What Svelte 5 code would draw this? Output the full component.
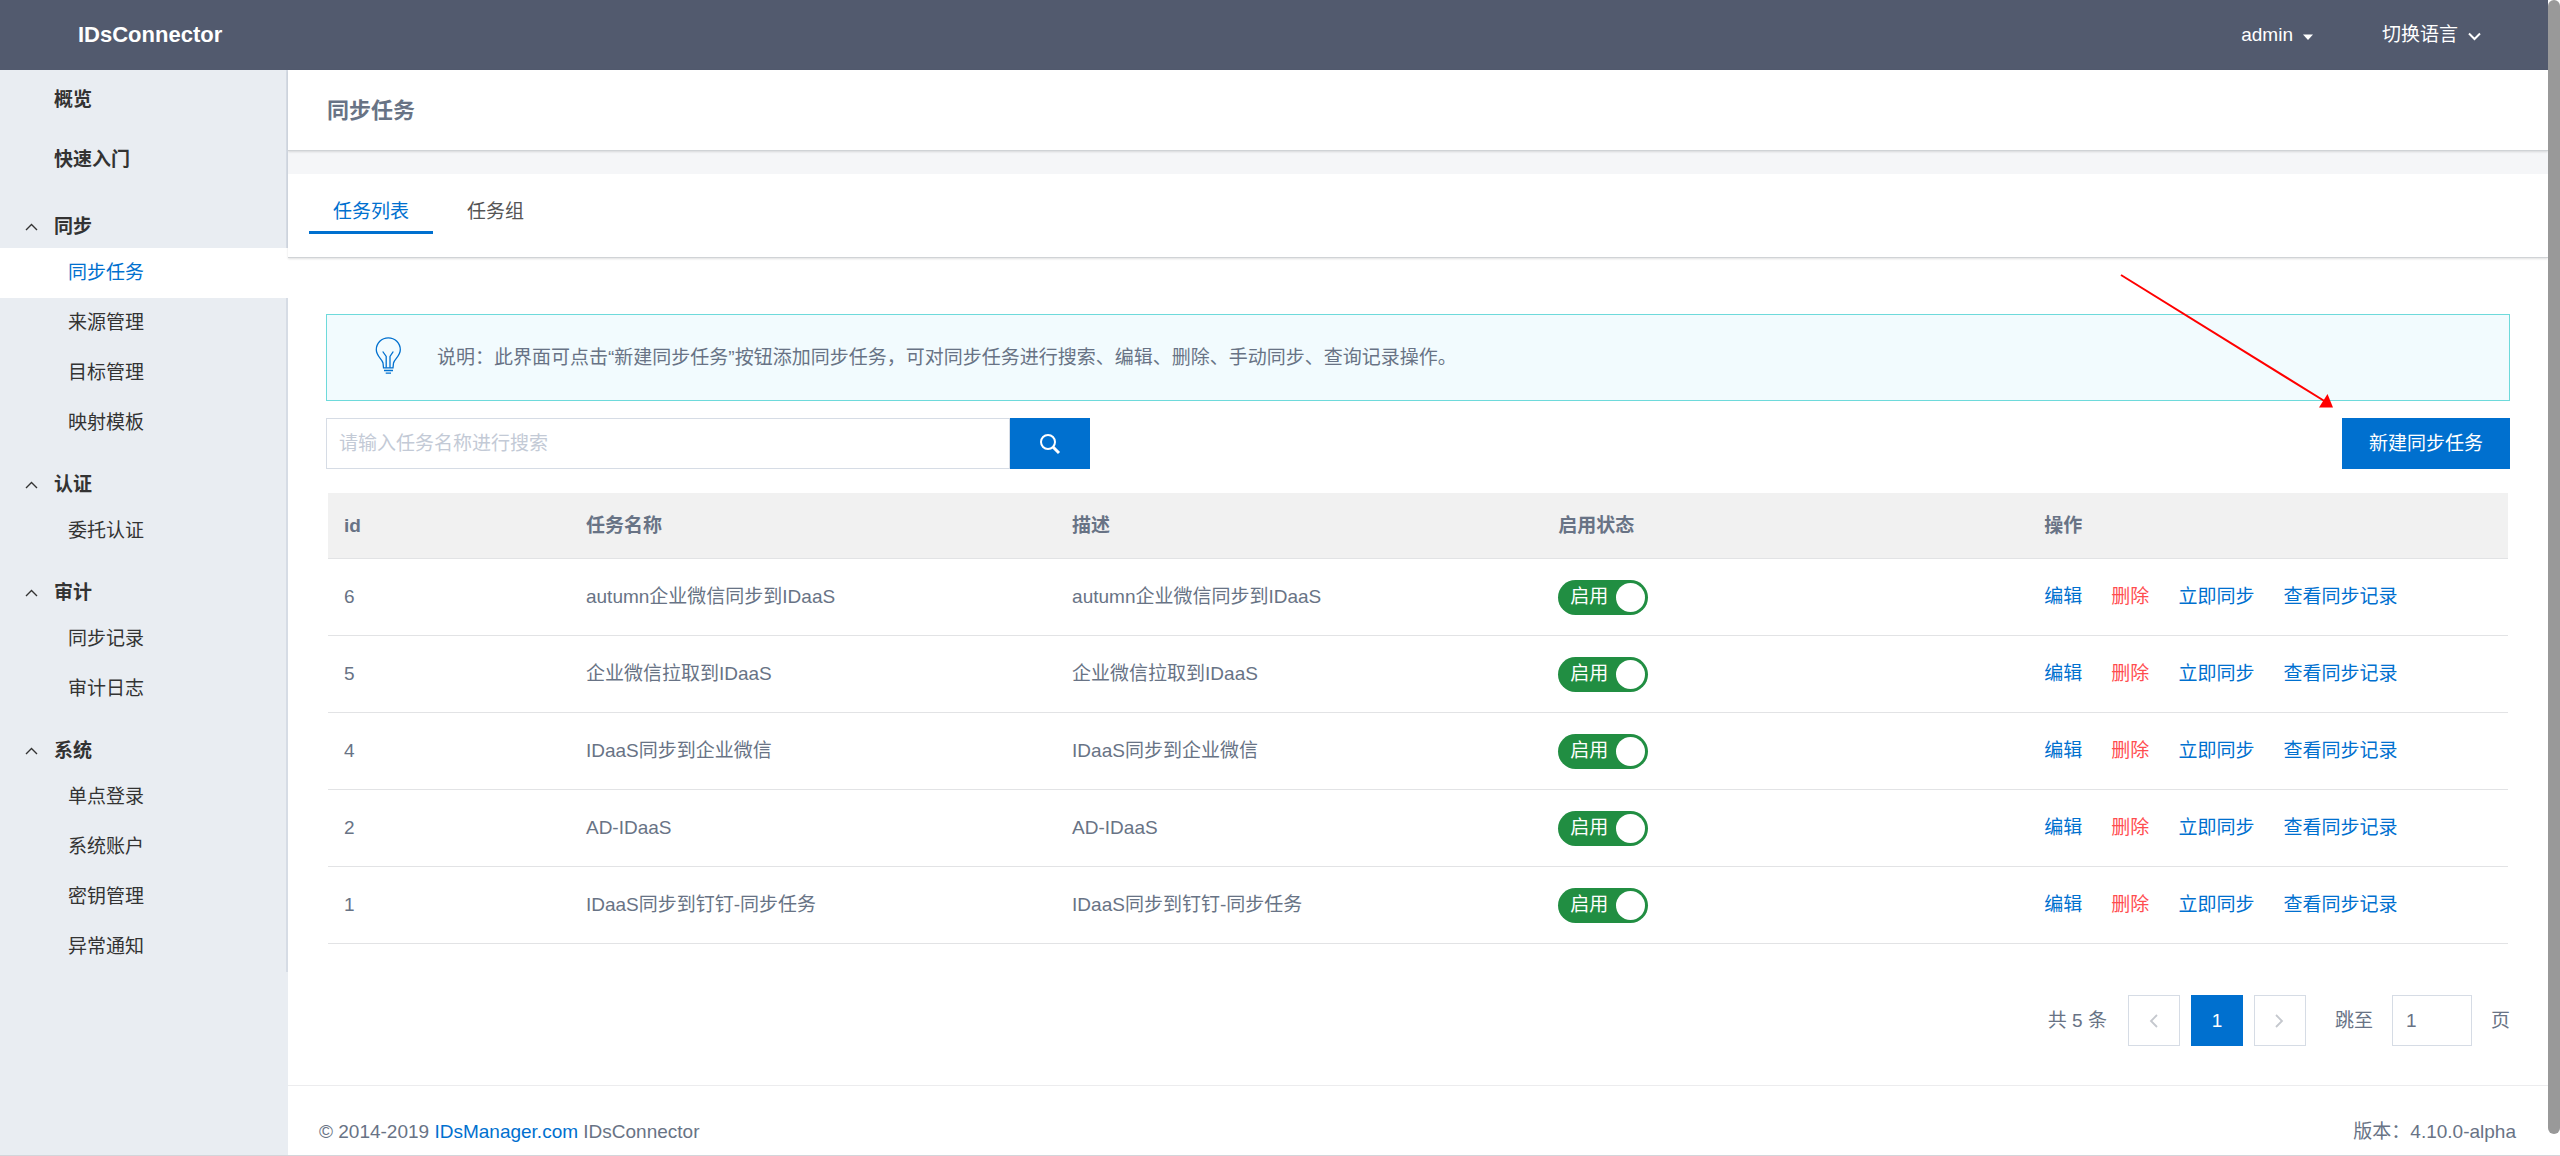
<script>
	const topLinks = ['概览', '快速入门'];

	const groups = [
		{ title: '同步', items: ['同步任务', '来源管理', '目标管理', '映射模板'] },
		{ title: '认证', items: ['委托认证'] },
		{ title: '审计', items: ['同步记录', '审计日志'] },
		{ title: '系统', items: ['单点登录', '系统账户', '密钥管理', '异常通知'] },
	];

	const tabs = ['任务列表', '任务组'];

	let activeItem = $state('同步任务');
	let activeTab = $state('任务列表');
	let keyword = $state('');
	let page = $state('1');

	let tasks = $state([
		{ id: 6, name: 'autumn企业微信同步到IDaaS', enabled: true },
		{ id: 5, name: '企业微信拉取到IDaaS', enabled: true },
		{ id: 4, name: 'IDaaS同步到企业微信', enabled: true },
		{ id: 2, name: 'AD-IDaaS', enabled: true },
		{ id: 1, name: 'IDaaS同步到钉钉-同步任务', enabled: true },
	]);

	const visibleTasks = $derived(tasks.filter((t) => t.name.includes(keyword)));
</script>

<div class="page">
	<header class="topbar">
		<a class="brand" href="#home">IDsConnector</a>
		<div class="user-menu">
			<button type="button" class="menu-button">
				admin
				<svg width="10" height="6" viewBox="0 0 10 6"><path d="M0 0.5h10L5 6z" fill="currentColor" /></svg>
			</button>
			<button type="button" class="menu-button lang">
				切换语言
				<svg width="13" height="9" viewBox="0 0 13 9">
					<path d="M1 1.5l5.5 5.5L12 1.5" fill="none" stroke="currentColor" stroke-width="2" />
				</svg>
			</button>
		</div>
	</header>

	<div class="body">
		<aside class="sidebar">
			<nav>
				{#each topLinks as link}
					<a class="top-link" href="#{link}">{link}</a>
				{/each}
				{#each groups as group}
					<button type="button" class="group-title">
						<svg width="13" height="8" viewBox="0 0 13 8">
							<path d="M1 7l5.5-5.5L12 7" fill="none" stroke="currentColor" stroke-width="1.4" />
						</svg>
						{group.title}
					</button>
					{#each group.items as item}
						<a
							class="item"
							class:active={item === activeItem}
							href="#{item}"
							onclick={() => (activeItem = item)}>{item}</a
						>
					{/each}
				{/each}
			</nav>
		</aside>

		<main>
			<div class="heading">
				<h1>同步任务</h1>
			</div>

			<div class="tabs" role="tablist">
				{#each tabs as tab}
					<button
						type="button"
						role="tab"
						class="tab"
						class:active={tab === activeTab}
						aria-selected={tab === activeTab}
						onclick={() => (activeTab = tab)}>{tab}</button
					>
				{/each}
			</div>

			<section class="content">
				<svg class="pointer" width="214" height="135" viewBox="0 0 214 135">
					<path d="M1 1L206 128" stroke="#f00" stroke-width="2" />
					<path d="M213 133.500H199L207.500 120z" fill="#f00" />
				</svg>

				<div class="notice">
					<svg
						class="bulb"
						width="27"
						height="38"
						viewBox="0 0 27 38"
						fill="none"
						stroke="currentColor"
						stroke-width="1.3"
					>
						<path
							d="M8.500 30.800L8 26C7 22 1.300 19 1.300 12.800a12 12 0 0 1 24 0C25.300 19 19.500 22 18.500 26L18 30.800z"
						/>
						<path d="M7.700 14.500l3.500 5v11.300M18.300 14.500l-3.300 5v11.300" />
						<path d="M9 33.500h9M10.700 36.200h5.300" />
					</svg>
					<p>说明：此界面可点击“新建同步任务”按钮添加同步任务，可对同步任务进行搜索、编辑、删除、手动同步、查询记录操作。</p>
				</div>

				<div class="toolbar">
					<form class="search" onsubmit={(e) => e.preventDefault()}>
						<input
							type="text"
							aria-label="任务名称"
							placeholder="请输入任务名称进行搜索"
							bind:value={keyword}
						/>
						<button type="submit" aria-label="搜索">
							<svg width="22" height="22" viewBox="0 0 22 22" fill="none" stroke="currentColor">
								<circle cx="9" cy="9" r="7" stroke-width="2" />
								<path d="M14 14l6 6" stroke-width="3" />
							</svg>
						</button>
					</form>
					<button type="button" class="create">新建同步任务</button>
				</div>

				<table>
					<colgroup>
						<col class="col-id" />
						<col class="col-wide" />
						<col class="col-wide" />
						<col class="col-wide" />
						<col />
					</colgroup>
					<thead>
						<tr>
							<th>id</th>
							<th>任务名称</th>
							<th>描述</th>
							<th>启用状态</th>
							<th>操作</th>
						</tr>
					</thead>
					<tbody>
						{#each visibleTasks as task (task.id)}
							<tr>
								<td>{task.id}</td>
								<td>{task.name}</td>
								<td>{task.name}</td>
								<td>
									<label class="switch">
										<input type="checkbox" bind:checked={task.enabled} />
										<span>{task.enabled ? '启用' : '禁用'}</span>
									</label>
								</td>
								<td>
									<div class="actions">
										<a href="#edit">编辑</a>
										<a href="#delete" class="danger">删除</a>
										<a href="#sync">立即同步</a>
										<a href="#records">查看同步记录</a>
									</div>
								</td>
							</tr>
						{/each}
					</tbody>
				</table>

				<div class="pagination">
					<span class="total">共 {tasks.length} 条</span>
					<div class="pages">
						<button type="button" aria-label="上一页" disabled>
							<svg width="9" height="14" viewBox="0 0 9 14">
								<path d="M8 1L2 7l6 6" fill="none" stroke="currentColor" stroke-width="1.8" />
							</svg>
						</button>
						<button type="button" class="current">1</button>
						<button type="button" aria-label="下一页" disabled>
							<svg width="9" height="14" viewBox="0 0 9 14">
								<path d="M1 1l6 6-6 6" fill="none" stroke="currentColor" stroke-width="1.8" />
							</svg>
						</button>
					</div>
					<label class="jumper">
						跳至
						<input type="text" bind:value={page} />
						页
					</label>
				</div>
			</section>

			<footer>
				<span>© 2014-2019 <a href="#idsmanager">IDsManager.com</a> IDsConnector</span>
				<span>版本：4.10.0-alpha</span>
			</footer>
		</main>
	</div>

	<div class="scrollbar"></div>
</div>

<style>
	:global(body) {
		margin: 0;
		background: #fff;
	}

	.page {
		display: flex;
		flex-direction: column;
		box-sizing: border-box;
		min-height: 100vh;
		padding-right: 12px;
		border-bottom: 1px solid #d3d5da;
		color: #687385;
		font-family: 'Liberation Sans', Arial, 'Noto Sans CJK SC', sans-serif;
		font-size: 19px;
		line-height: 30px;
	}

	a {
		color: #0070cf;
		text-decoration: none;
	}

	button,
	input {
		box-sizing: border-box;
		margin: 0;
		padding: 0;
		border: 0;
		border-radius: 0;
		background: none;
		color: inherit;
		font: inherit;
	}

	button {
		cursor: pointer;
	}

	svg {
		flex: none;
		display: block;
	}

	/* top bar */
	.topbar {
		display: flex;
		align-items: center;
		justify-content: space-between;
		height: 70px;
		padding: 0 67px 0 78px;
		background: #525a6e;
		color: #fff;
	}

	.brand {
		color: #fff;
		font-size: 22px;
		font-weight: 700;
	}

	.user-menu {
		display: flex;
		gap: 69px;
	}

	.menu-button {
		display: flex;
		align-items: center;
		gap: 10px;
	}

	.menu-button svg {
		margin-top: 3px;
	}

	/* sidebar */
	.body {
		display: flex;
		flex: 1;
	}

	.sidebar {
		flex: none;
		width: 288px;
		background: #e9edf2;
		color: #333;
	}

	.top-link {
		display: block;
		padding-left: 54px;
		border-right: 2px solid #d6dce5;
		color: #333;
		font-weight: 700;
		line-height: 60px;
	}

	.group-title {
		display: flex;
		align-items: center;
		gap: 16px;
		width: 100%;
		padding: 22px 0 6px 25px;
		border-right: 2px solid #d6dce5;
		font-weight: 700;
	}

	.item {
		display: block;
		padding-left: 68px;
		border-right: 2px solid #d6dce5;
		color: #333;
		line-height: 50px;
	}

	.item.active {
		border-right-color: #fff;
		background: #fff;
		color: #0070cf;
	}

	/* main column */
	main {
		display: flex;
		flex: 1;
		flex-direction: column;
		min-width: 0;
	}

	.heading {
		position: relative;
		padding: 26px 39px 24px;
		border-bottom: 1px solid #d0d3d6;
		box-shadow: 0 1px 2px rgba(0, 0, 0, 0.12);
	}

	h1 {
		margin: 0;
		font-size: 22px;
		font-weight: 700;
		line-height: 30px;
	}

	.tabs {
		display: flex;
		gap: 10px;
		padding: 14px 21px 23px;
		border-top: 23px solid #f5f6f8;
		border-bottom: 1px solid #d0d3d6;
		box-shadow: 0 1px 2px rgba(0, 0, 0, 0.12);
	}

	.tab {
		padding: 9px 24px 4px;
		border-bottom: 3px solid transparent;
		color: #555;
	}

	.tab.active {
		border-bottom-color: #0070cf;
		color: #0070cf;
	}

	.content {
		position: relative;
		flex: 1;
		padding: 56px 38px 36px;
	}

	/* arrow laid over the notice, pointing at the create button */
	.pointer {
		position: absolute;
		top: 16px;
		right: 214px;
	}

	.notice {
		display: flex;
		align-items: center;
		gap: 35px;
		box-sizing: border-box;
		height: 87px;
		padding: 0 48px;
		border: 1px solid #6edadb;
		background: #f2fbfe;
	}

	.bulb {
		margin-bottom: 4px;
		color: #0070cf;
	}

	.notice p {
		margin: 0;
	}

	.toolbar {
		display: flex;
		justify-content: space-between;
		margin: 17px 0 24px;
	}

	.search {
		display: flex;
		width: 35%;
	}

	.search input {
		flex: 1;
		min-width: 0;
		height: 51px;
		padding: 0 12px;
		border: 1px solid #d6dce5;
	}

	.search input::placeholder {
		color: #c3cad6;
		opacity: 1;
	}

	.search button {
		display: grid;
		place-items: center;
		width: 80px;
		background: #0070cf;
		color: #fff;
	}

	.create {
		height: 51px;
		padding: 0 27px;
		background: #0070cf;
		color: #fff;
	}

	/* task table */
	table {
		width: calc(100% - 4px);
		margin: 0 2px;
		border-collapse: separate;
		border-spacing: 0;
		table-layout: fixed;
	}

	.col-id {
		width: 11.1%;
	}

	.col-wide {
		width: 22.3%;
	}

	th,
	td {
		box-sizing: border-box;
		padding: 0 16px;
		border-bottom: 1px solid #e2e3e5;
		text-align: left;
	}

	th {
		height: 66px;
		background: #f1f1f1;
		font-weight: 700;
	}

	td {
		height: 77px;
	}

	.switch {
		display: flex;
		align-items: center;
		position: relative;
		width: 90px;
		height: 35px;
		border-radius: 18px;
		background: #218e42;
		color: #fff;
		cursor: pointer;
	}

	.switch span {
		padding-left: 12px;
	}

	.switch input {
		position: absolute;
		top: 3px;
		right: 3px;
		width: 29px;
		height: 29px;
		border-radius: 50%;
		background: #fff;
		appearance: none;
	}

	.switch:has(input:not(:checked)) {
		background: #bbb;
	}

	.actions {
		display: flex;
		gap: 29px;
	}

	.danger {
		color: #ff4d4f;
	}

	/* pagination */
	.pagination {
		display: flex;
		align-items: center;
		justify-content: flex-end;
		margin-top: 51px;
	}

	.pages {
		display: flex;
		gap: 11px;
		margin: 0 29px 0 21px;
	}

	.pages button {
		display: grid;
		place-items: center;
		width: 52px;
		height: 51px;
		border: 1px solid #d6dce5;
		color: #c5c8ce;
	}

	.pages .current {
		border-color: #0070cf;
		background: #0070cf;
		color: #fff;
	}

	.jumper {
		display: flex;
		align-items: center;
		gap: 19px;
	}

	.jumper input {
		width: 80px;
		height: 51px;
		padding: 0 13px;
		border: 1px solid #d6dce5;
	}

	footer {
		display: flex;
		justify-content: space-between;
		padding: 31px 32px 8px 31px;
		border-top: 1px solid #ececee;
	}

	.scrollbar {
		position: fixed;
		top: 0;
		right: 0;
		bottom: 22px;
		width: 12px;
		border-radius: 6px;
		background: #999;
	}
</style>
